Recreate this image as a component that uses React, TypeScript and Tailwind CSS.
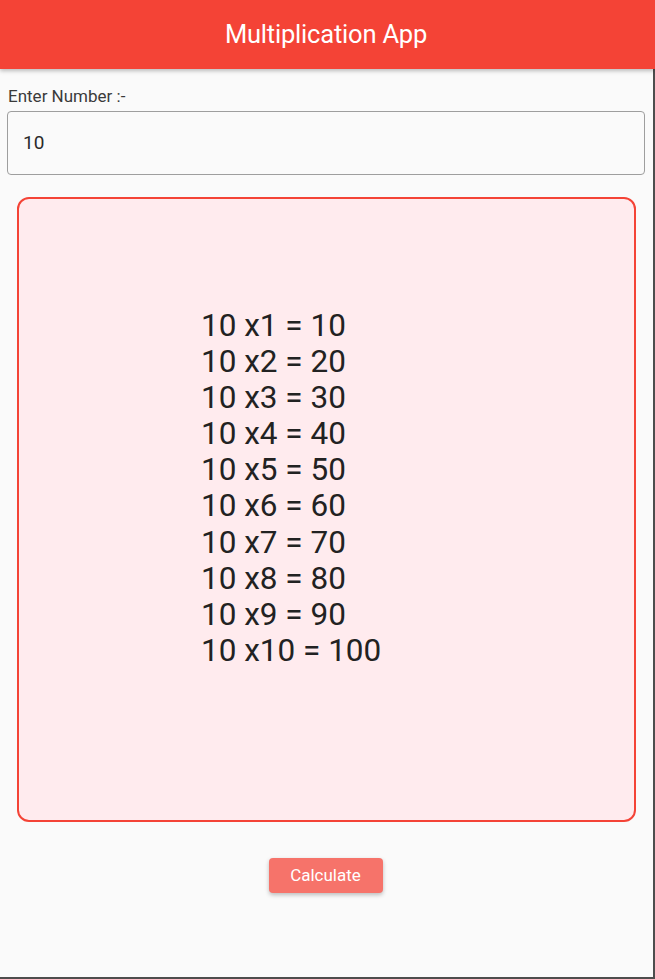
import React from "react";

export default function App() {
  const rows = Array.from({ length: 10 }, (_, i) => i + 1);
  return (
    <div className="w-[655px] h-[979px] flex flex-col bg-[#fafafa] overflow-hidden" style={{ fontFamily: "Roboto, 'Liberation Sans', sans-serif" }}>
      <div className="relative z-10 h-[69px] shrink-0 bg-[#f44336] flex items-center justify-center shadow-[0_2px_4px_rgba(0,0,0,0.25)]">
        <span className="text-white text-[25.5px] leading-none tracking-[-0.2px] mr-[3px]">Multiplication App</span>
      </div>
      <div className="flex-1 flex flex-col border-r-2 border-b-2 border-[#4d4d4d]">
        <div className="pl-[8px] pt-[17px] text-[17px] leading-[20px] text-[#3a3a3a]">Enter Number :-</div>
        <div className="ml-[7px] mr-[8px] mt-[5px] h-[64px] rounded-[4px] border border-[#9e9e9e] flex items-center pl-[15px]">
          <span className="text-[19px] text-[#2a2a2a]">10</span>
        </div>
        <div className="ml-[17px] mr-[17px] mt-[22px] h-[625px] rounded-[12px] border-2 border-[#f44336] bg-[#ffebee] pl-[182px] pt-[109px] flex flex-col">
          {rows.map((i) => (
            <div key={i} className="text-[31.5px] leading-[36.1px] text-[#222222] whitespace-pre">
              {`10 x${i} = ${10 * i}`}
            </div>
          ))}
        </div>
        <div className="flex justify-center mt-[36px] pr-[2px]">
          <button className="w-[114px] h-[35px] rounded-[4px] bg-[#f6736a] text-white text-[17px] shadow-[0_2px_4px_rgba(0,0,0,0.25)]">
            Calculate
          </button>
        </div>
      </div>
    </div>
  );
}
